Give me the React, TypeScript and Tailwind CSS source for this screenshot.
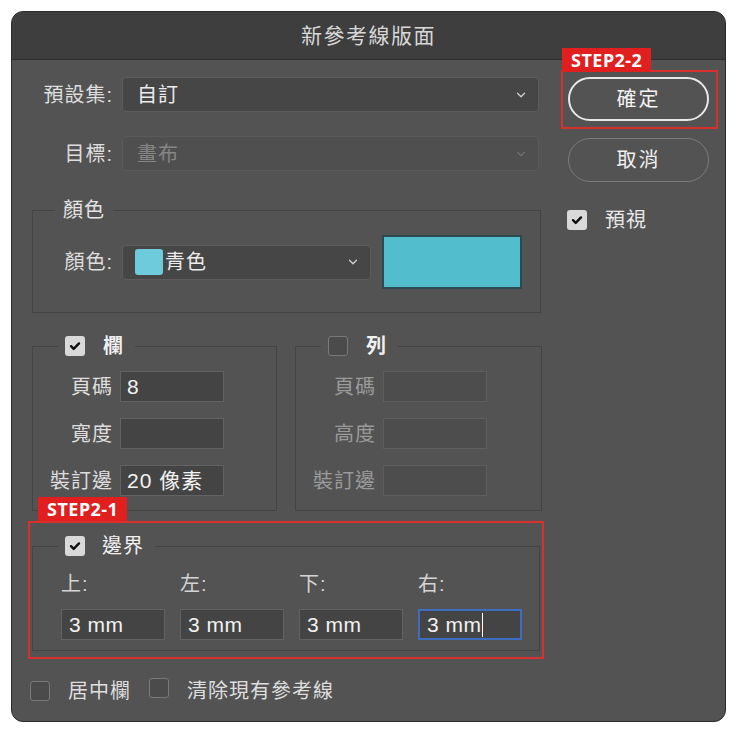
import { ChevronDown } from 'lucide-react';
import clsx from 'clsx';

const font = { fontFamily: '"Liberation Sans", "Noto Sans CJK TC", sans-serif' };

function Check({ checked }: { checked: boolean }) {
  return (
    <span
      className={clsx(
        'inline-flex items-center justify-center w-[20px] h-[20px] rounded-[3px] shrink-0',
        checked ? 'bg-[#d9d9d9]' : 'bg-[#4b4b4b] border border-[#7a7a7a]'
      )}>
      {checked && (
        <svg width="14" height="14" viewBox="0 0 14 14">
          <path d="M3 7.2l2.7 2.7L11 4.4" fill="none" stroke="#111" strokeWidth="2.4" strokeLinecap="round" strokeLinejoin="round" />
        </svg>
      )}
    </span>
  );
}

function Select({ children, disabled, className }: { children: React.ReactNode; disabled?: boolean; className?: string }) {
  return (
    <div
      className={clsx(
        'h-[35px] rounded-[4px] border flex items-center pl-[14px] pr-[10px]',
        disabled ? 'bg-[#4f4f4f] border-[#5a5a5a] text-[#858585]' : 'bg-[#464646] border-[#5c5c5c] text-[#ececec]',
        className
      )}>
      <div className="flex-1 flex items-center">{children}</div>
      <ChevronDown size={14} strokeWidth={2.2} className={disabled ? 'text-[#6f6f6f]' : 'text-[#d0d0d0]'} />
    </div>
  );
}

function Field({ label, value, disabled }: { label: string; value?: string; disabled?: boolean }) {
  return (
    <div className="flex items-center h-[31px]">
      <span className={clsx('w-[80px] text-right', disabled ? 'text-[#9a9a9a]' : 'text-[#dedede]')}>{label}</span>
      <div
        className={clsx(
          'ml-[7px] w-[104px] h-[31px] border px-[6px] flex items-center text-[#f2f2f2] text-[21px]',
          disabled ? 'bg-[#4d4d4d] border-[#5e5e5e]' : 'bg-[#444444] border-[#626262]'
        )}>
        {value}
      </div>
    </div>
  );
}

function Badge({ text }: { text: string }) {
  return (
    <span
      className="h-[24px] px-[9px] bg-[#e11f1f] text-white font-bold text-[18px] flex items-center tracking-[0.5px]"
      style={{ fontFamily: '"Noto Sans", "Open Sans", sans-serif' }}>
      {text}
    </span>
  );
}

export default function App() {
  const margins = [
    { label: '上:', value: '3 mm' },
    { label: '左:', value: '3 mm' },
    { label: '下:', value: '3 mm' },
    { label: '右:', value: '3 mm', focused: true }
  ];

  return (
    <div className="w-[740px] h-[737px] bg-white pt-[11px] pl-[11px]" style={font}>
      <div className="w-[715px] h-[711px] rounded-[12px] bg-[#535353] border border-[#2b2b2b] overflow-hidden text-[20px] tracking-[1px]">
        <div className="h-[48px] bg-[#3e3e3e] border-b border-[#2e2e2e] flex items-center justify-center text-[#d8d8d8] text-[21px] tracking-[1.5px]">
          新參考線版面
        </div>

        <div className="flex pl-[16px]">
          {/* left column */}
          <div className="w-[516px] flex flex-col">
            <div className="mt-[17px] flex items-center">
              <span className="w-[85px] text-right text-[#dedede]">預設集:</span>
              <Select className="ml-[9px] w-[417px]">自訂</Select>
            </div>
            <div className="mt-[24px] flex items-center">
              <span className="w-[85px] text-right text-[#dedede]">目標:</span>
              <Select disabled className="ml-[9px] w-[417px]">
                畫布
              </Select>
            </div>

            <fieldset className="mt-[27px] ml-[4px] w-[509px] border border-[#444444] pb-[23px]">
              <legend className="ml-[22px] px-[8px] text-[#e4e4e4] leading-[24px]">顏色</legend>
              <div className="mt-[13px] flex items-center">
                <span className="w-[80px] text-right text-[#dedede]">顏色:</span>
                <Select className="ml-[9px] w-[249px]">
                  <span className="w-[28px] h-[26px] rounded-[3px] bg-[#6ecbdb] mr-[2px] -ml-[2px]" />
                  青色
                </Select>
                <div className="ml-[11px] w-[140px] h-[54px] bg-[#52bdcd] border-2 border-[#2c4a50]" />
              </div>
            </fieldset>

            <div className="mt-[21px] flex">
              <fieldset className="ml-[4px] w-[245px] border border-[#444444] pb-[14px]">
                <legend className="ml-[25px] px-[7px] flex items-center leading-[24px]">
                  <Check checked />
                  <span className="ml-[18px] pr-[4px] text-[#f0f0f0] font-bold">欄</span>
                </legend>
                <div className="mt-[13px] flex flex-col gap-[16px]">
                  <Field label="頁碼" value="8" />
                  <Field label="寬度" />
                  <Field label="裝訂邊" value="20 像素" />
                </div>
              </fieldset>
              <fieldset className="ml-[18px] w-[247px] border border-[#444444] pb-[14px]">
                <legend className="ml-[25px] px-[7px] flex items-center leading-[24px]">
                  <Check checked={false} />
                  <span className="ml-[18px] pr-[4px] text-[#f0f0f0] font-bold">列</span>
                </legend>
                <div className="mt-[13px] flex flex-col gap-[16px]">
                  <Field label="頁碼" disabled />
                  <Field label="高度" disabled />
                  <Field label="裝訂邊" disabled />
                </div>
              </fieldset>
            </div>

            <div className="relative mt-[10px] w-[516px] border-2 border-[#d8302c] pt-[11px] pb-[6px]">
              <div className="absolute -top-[26px] left-[8px]">
                <Badge text="STEP2-1" />
              </div>
              <fieldset className="ml-[2px] w-[508px] border border-[#444444] pb-[10px]">
                <legend className="ml-[25px] px-[7px] flex items-center leading-[24px]">
                  <Check checked />
                  <span className="ml-[17px] pr-[4px] text-[#f0f0f0]">邊界</span>
                </legend>
                <div className="mt-[13px] pl-[28px] grid grid-cols-[119px_119px_119px_119px]">
                  {margins.map((m) => (
                    <div key={m.label} className="flex flex-col">
                      <span className="text-[#d4d4d4] h-[26px] leading-[26px]">{m.label}</span>
                      <div
                        className={clsx(
                          'mt-[12px] w-[104px] h-[31px] px-[7px] flex items-center text-[#f2f2f2] text-[21px] tracking-[0.5px] bg-[#444444] border',
                          m.focused ? 'border-[#3d6cc0] border-2 px-[6px]' : 'border-[#626262]'
                        )}>
                        {m.value}
                        {m.focused && <span className="w-[1.5px] h-[24px] bg-white" />}
                      </div>
                    </div>
                  ))}
                </div>
              </fieldset>
            </div>

            <div className="mt-[17px] ml-[2px] flex items-center">
              <Check checked={false} />
              <span className="ml-[18px] text-[#dedede]">居中欄</span>
              <span className="ml-[18px]">
                <Check checked={false} />
              </span>
              <span className="ml-[18px] text-[#dedede]">清除現有參考線</span>
            </div>
          </div>

          {/* right column */}
          <div className="ml-[17px] w-[157px] flex flex-col">
            <div className="relative mt-[10px] border-2 border-[#d8302c] pt-[5px] pl-[5px] pb-[6px]">
              <div className="absolute -top-[24px] left-[-1px]">
                <Badge text="STEP2-2" />
              </div>
              <div className="w-[141px] h-[44px] rounded-full border-2 border-[#e8e8e8] flex items-center justify-center text-[#f4f4f4] tracking-[2px]">
                確定
              </div>
            </div>
            <div className="mt-[9px] ml-[7px] w-[141px] h-[44px] rounded-full border-[1.5px] border-[#7a7a7a] flex items-center justify-center text-[#f0f0f0] tracking-[2px]">
              取消
            </div>
            <div className="mt-[23px] ml-[6px] flex items-center">
              <Check checked />
              <span className="ml-[18px] text-[#e8e8e8]">預視</span>
            </div>
          </div>
        </div>
      </div>
    </div>
  );
}
